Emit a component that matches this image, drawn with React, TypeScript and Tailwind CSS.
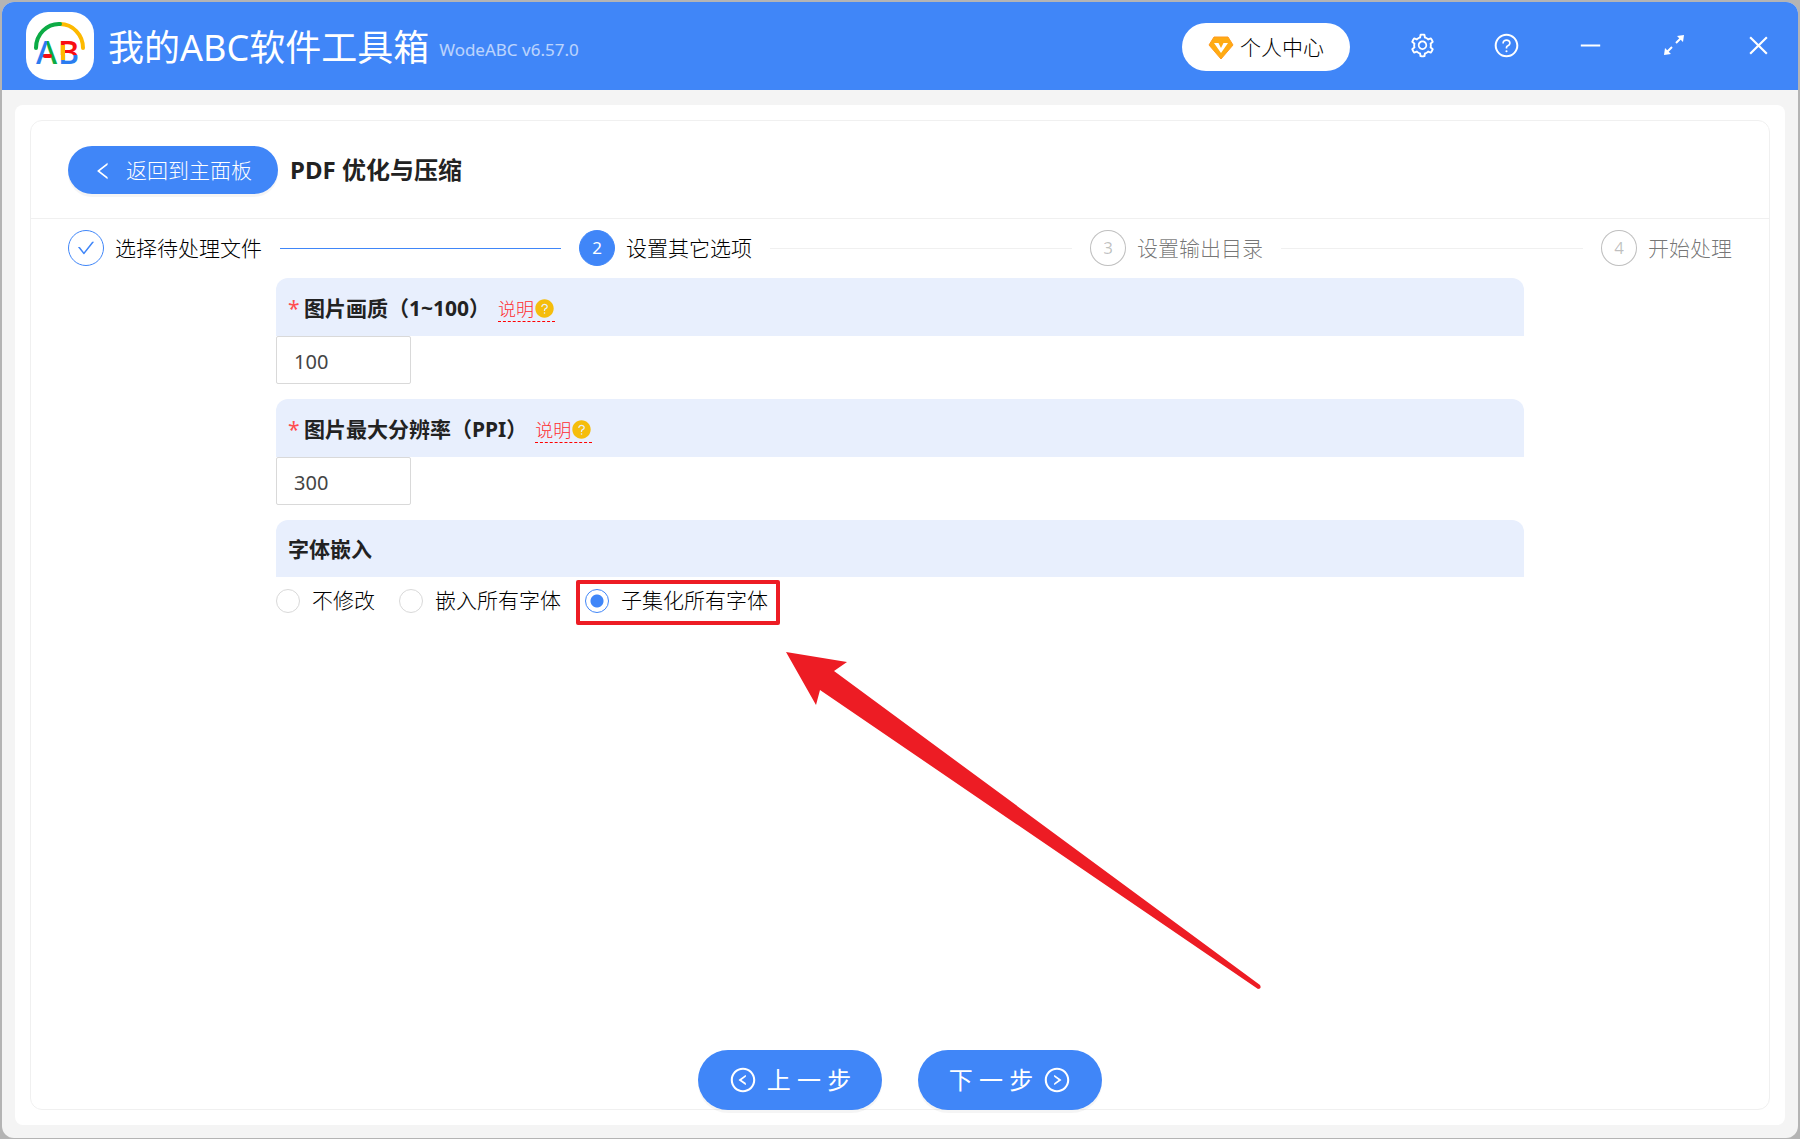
import { useState } from "react";
import {
  AiFillQuestionCircle,
  AiOutlineCheck,
  AiOutlineClose,
  AiOutlineLeft,
  AiOutlineLeftCircle,
  AiOutlineMinus,
  AiOutlineQuestionCircle,
  AiOutlineRightCircle,
  AiOutlineSetting,
} from "react-icons/ai";

const steps = [
  { title: "选择待处理文件", status: "done" },
  { title: "设置其它选项", status: "active" },
  { title: "设置输出目录", status: "wait" },
  { title: "开始处理", status: "wait" },
];

const fontOptions = ["不修改", "嵌入所有字体", "子集化所有字体"];

const circleStyle: Record<string, string> = {
  done: "border-[#4086f8] bg-white text-[#4086f8]",
  active: "border-[#4086f8] bg-[#4086f8] text-white",
  wait: "border-black/25 bg-white text-black/25",
};

const windowButton = "flex h-11 w-20 items-center justify-center";
const stepButton =
  "flex h-[60px] w-[184px] items-center justify-center gap-2.5 rounded-full bg-[#4086f8] text-2xl font-normal text-white shadow-[0_3px_0_rgba(0,0,0,0.04)]";

function Logo() {
  return (
    <svg width="68" height="68" viewBox="0 0 68 68" fill="none" className="shrink-0">
      <defs>
        <linearGradient id="logoA">
          <stop offset="50%" stopColor="#2b7cf0" />
          <stop offset="50%" stopColor="#0cab45" />
        </linearGradient>
        <linearGradient id="logoB" x1="0" y1="0" x2="0" y2="1">
          <stop offset="58%" stopColor="#f80d12" />
          <stop offset="58%" stopColor="#2b7cf0" />
        </linearGradient>
      </defs>
      <rect width="68" height="68" rx="22" fill="#fff" />
      <path d="M57 36A23 24 0 0 0 34 12" stroke="#fdb900" strokeWidth="4" strokeLinecap="round" />
      <path d="M10 36A23 24 0 0 1 34 12" stroke="#0cab45" strokeWidth="4" strokeLinecap="round" />
      <text x="10" y="52" fontSize="32" fontWeight="600" fontFamily="Open Sans, sans-serif" fill="url(#logoA)">A</text>
      <text x="32" y="52" fontSize="32" fontWeight="600" fontFamily="Open Sans, sans-serif" fill="url(#logoB)">B</text>
      <rect x="35" y="33" width="4" height="15" fill="#fdb900" />
      <rect x="17" y="42" width="9" height="4" rx="2" fill="#f80d12" />
    </svg>
  );
}

function VipIcon() {
  return (
    <svg width="26" height="24" viewBox="0 0 26 24">
      <path d="M6 1h14l5 8-12 14L1 9z" fill="#ffab12" stroke="#ff9a1f" strokeLinejoin="round" />
      <path d="M6 7h4.500l2.500 5 2.500-5h4.500l-7 10z" fill="#fff" />
    </svg>
  );
}

function ExpandIcon() {
  return (
    <svg width="20" height="20" viewBox="0 0 20 20" fill="#fff">
      <path d="M12 8l6-6M8 12l-6 6" stroke="#fff" strokeWidth="2" />
      <path d="M13 1l7-1-1 7zM1 13l-1 7 7-1z" />
    </svg>
  );
}

function TitleBar() {
  return (
    <header className="flex h-[88px] shrink-0 items-center bg-[#4086f8] pl-6 text-white">
      <Logo />
      <h1 className="ml-3.5 pt-1 text-4xl font-normal">我的ABC软件工具箱</h1>
      <span className="ml-2.5 pt-2 text-[17px] font-normal text-white/65">WodeABC v6.57.0</span>
      <div className="ml-auto flex items-start pt-0.5">
        <button className="mr-8 flex h-12 w-[168px] items-center justify-center gap-1.5 rounded-full bg-white pt-0.5 text-[21px] text-black">
          <VipIcon />
          个人中心
        </button>
        <div className="flex gap-1">
          <button aria-label="设置" className={windowButton}>
            <AiOutlineSetting size={27} />
          </button>
          <button aria-label="帮助" className={windowButton}>
            <AiOutlineQuestionCircle size={27} />
          </button>
          <button aria-label="最小化" className={windowButton}>
            <AiOutlineMinus size={27} />
          </button>
          <button aria-label="最大化" className={windowButton}>
            <ExpandIcon />
          </button>
          <button aria-label="关闭" className={windowButton}>
            <AiOutlineClose size={27} />
          </button>
        </div>
      </div>
    </header>
  );
}

function Steps() {
  return (
    <ol className="flex gap-[18px]">
      {steps.map((step, i) => (
        <li key={step.title} className="flex flex-1 items-center last:flex-none">
          <span
            className={
              "flex size-9 shrink-0 items-center justify-center rounded-full border text-[17px] font-normal " +
              circleStyle[step.status]
            }
          >
            {step.status === "done" ? <AiOutlineCheck size={20} /> : i + 1}
          </span>
          <span
            className={
              "ml-[11px] pt-0.5 text-[21px] whitespace-nowrap " +
              (step.status === "wait" ? "text-black/55" : "text-black")
            }
          >
            {step.title}
          </span>
          {i < steps.length - 1 && (
            <span
              className={"ml-[18px] h-px flex-1 " + (step.status === "done" ? "bg-[#4086f8]" : "bg-[#f0f0f0]")}
            />
          )}
        </li>
      ))}
    </ol>
  );
}

function NumberField({ id, label, value }: { id: string; label: string; value: string }) {
  return (
    <div className="mb-[15px]">
      <div className="flex h-[58px] items-center rounded-t-xl bg-[#e8effd] px-3 pt-1">
        <span className="w-4 text-[21px] font-normal text-[#ff4d4f]">*</span>
        <label htmlFor={id} className="text-[21px] font-bold">
          {label}
        </label>
        <a
          href="#help"
          className="ml-2 flex items-center border-b border-dashed border-[#f00] text-lg leading-6 text-[#ff2d30]"
        >
          说明
          <AiFillQuestionCircle size={21} className="text-[#f5bd0c]" />
        </a>
      </div>
      <input
        id={id}
        defaultValue={value}
        className="block h-12 w-[135px] rounded-xs border border-[#d9d9d9] px-[17px] pt-0.5 text-[20px] font-normal text-[#444]"
      />
    </div>
  );
}

export default function App() {
  const [embed, setEmbed] = useState(fontOptions[2]);

  return (
    <div className="h-screen bg-[#b4b4b4] p-0.5 pb-px font-['Noto_Sans','Noto_Sans_CJK_SC',sans-serif] font-light text-[#222]">
      <div className="flex h-full flex-col overflow-hidden rounded-xl bg-[#f4f4f4]">
        <TitleBar />
        <main className="mx-[13px] mt-[15px] mb-[13px] flex flex-1 rounded-lg bg-white p-[15px]">
          <section className="relative flex flex-1 flex-col rounded-xl border border-[#f0f0f0]">
            <div className="flex h-[98px] items-center gap-3 border-b border-[#f0f0f0] px-[37px]">
              <button className="flex h-12 w-[210px] items-center gap-3 rounded-full bg-[#4086f8] pt-0.5 pl-6 text-[21px] text-white shadow-[0_3px_0_rgba(0,0,0,0.04)]">
                <AiOutlineLeft size={22} />
                返回到主面板
              </button>
              <h2 className="text-2xl font-bold">PDF 优化与压缩</h2>
            </div>

            <div className="flex-1 px-[37px] pt-[11px]">
              <Steps />
              <form className="mx-auto mt-3 w-3/4">
                <NumberField id="quality" label="图片画质（1~100）" value="100" />
                <NumberField id="ppi" label="图片最大分辨率（PPI）" value="300" />
                <fieldset>
                  <legend className="flex h-[57px] w-full items-center rounded-t-xl bg-[#e8effd] px-3 pt-0.5 text-[21px] font-bold">
                    字体嵌入
                  </legend>
                  <div className="flex h-12 items-center gap-6">
                    {fontOptions.map((name) => (
                      <label key={name} className="relative flex items-center gap-3 text-[21px] text-black">
                        <input
                          type="radio"
                          name="embed"
                          checked={embed === name}
                          onChange={() => setEmbed(name)}
                          className="size-6 appearance-none rounded-full border border-[#d9d9d9] bg-white checked:border-[#4086f8] checked:bg-[radial-gradient(circle,#4086f8_6px,#fff_7px)]"
                        />
                        {name}
                        {/* highlight box */}
                        {name === fontOptions[2] && (
                          <span className="pointer-events-none absolute -top-[5px] -right-3 -bottom-2 -left-[9px] rounded-xs border-4 border-[#ed1c24]" />
                        )}
                      </label>
                    ))}
                  </div>
                </fieldset>
              </form>
            </div>

            {/* arrow pointing at the highlighted option */}
            <svg
              width="480"
              height="340"
              viewBox="0 0 480 340"
              fill="#ed1c24"
              className="pointer-events-none absolute top-[530px] left-[755px]"
            >
              <path d="M0 1L61 11L48 20L474 334Q476 338 472 338L34 39L30 54Z" />
            </svg>

            <div className="-mb-px flex justify-center gap-9">
              <button className={stepButton}>
                <AiOutlineLeftCircle size={28} />
                上 一 步
              </button>
              <button className={stepButton}>
                下 一 步
                <AiOutlineRightCircle size={28} />
              </button>
            </div>
          </section>
        </main>
      </div>
    </div>
  );
}
